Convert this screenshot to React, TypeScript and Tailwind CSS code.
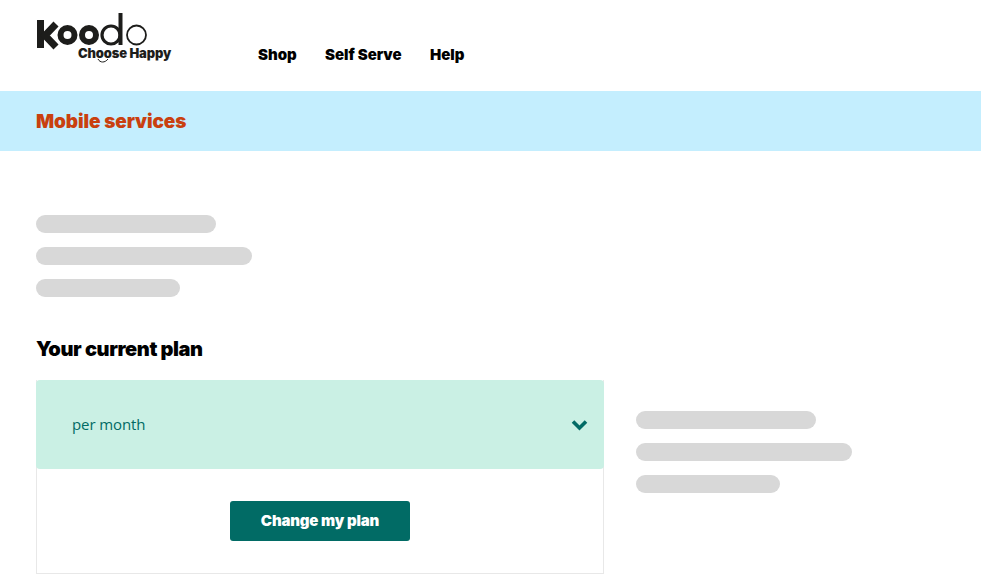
function KoodoLogo() {
  return (
    <div className="relative h-[62px] w-[140px]">
      <svg width="114" height="38" viewBox="0 0 114 38" className="block" aria-hidden="true">
        <path d="M4.5 8V36" stroke="#1d1d1b" strokeWidth="7" fill="none" />
        <path d="M20 12L9 23.5L20 35" stroke="#1d1d1b" strokeWidth="7" fill="none" />
        <circle cx="31.5" cy="23" r="7" fill="none" stroke="#1d1d1b" strokeWidth="6" />
        <circle cx="53" cy="23" r="7" fill="none" stroke="#1d1d1b" strokeWidth="6" />
        <circle cx="75" cy="23" r="9" fill="none" stroke="#1d1d1b" strokeWidth="3.2" />
        <path d="M84.5 1V33" stroke="#1d1d1b" strokeWidth="4" fill="none" />
        <circle cx="100.5" cy="23" r="9.5" fill="none" stroke="#1d1d1b" strokeWidth="1.8" />
      </svg>
      <div className="absolute left-[42px] top-[33px] font-['Inter',sans-serif] text-[13px] leading-[16px] font-black tracking-[-0.15px] whitespace-nowrap text-[#1d1d1b]">
        Choose Happy
      </div>
      <svg width="14" height="6" viewBox="0 0 14 6" className="absolute left-[60px] top-[46px]" aria-hidden="true">
        <path d="M2 1C4 5 9 5 12 1" stroke="#1d1d1b" strokeWidth="1" fill="none" />
      </svg>
    </div>
  );
}

function Skeleton() {
  return (
    <div className="flex flex-col gap-[14px]">
      <div className="h-[18px] w-[180px] rounded-full bg-[#d8d8d8]" />
      <div className="h-[18px] w-[216px] rounded-full bg-[#d8d8d8]" />
      <div className="h-[18px] w-[144px] rounded-full bg-[#d8d8d8]" />
    </div>
  );
}

export default function App() {
  return (
    <div className="h-[576px] overflow-hidden bg-white font-['Inter',sans-serif]">
      <header className="flex h-[91px] items-start pl-[36px]">
        <div className="pt-[12px]">
          <KoodoLogo />
        </div>
        <nav className="ml-[82px] flex gap-[28.5px] pt-[45px] text-[15px] leading-[20px] font-black tracking-[-0.05px] text-black">
          <a>Shop</a>
          <a>Self Serve</a>
          <a>Help</a>
        </nav>
      </header>

      <div className="flex h-[60px] items-center bg-[#c4eefe] pl-[36px]">
        <h1 className="pt-[2px] text-[19px] font-black tracking-[-0.1px] text-[#c9400f]">Mobile services</h1>
      </div>

      <main className="px-[36px] pt-[64px]">
        <Skeleton />
        <h2 className="mt-[40px] text-[20px] leading-[24px] font-black tracking-[-0.4px] text-black">Your current plan</h2>
        <div className="mt-[19px] flex gap-[32px]">
          <section className="h-[194px] w-[568px] border border-t-0 border-[#e8e8e8]">
            <div className="-mx-px flex h-[89px] items-center justify-between rounded-[4px] bg-[#caf0e4] pl-[36px] pr-[16px]">
              <span className="font-['Open_Sans',sans-serif] text-[15px] tracking-[-0.1px] text-[#016b65]">per month</span>
              <svg width="17" height="12" viewBox="0 0 17 12" aria-hidden="true">
                <path d="M2 2.5L8.5 9L15 2.5" stroke="#016b65" strokeWidth="3.6" fill="none" />
              </svg>
            </div>
            <div className="flex justify-center pt-[32px]">
              <button className="h-[40px] w-[180px] rounded-[3px] bg-[#016b65] text-[15px] font-black tracking-[-0.17px] text-white">
                Change my plan
              </button>
            </div>
          </section>
          <aside className="pt-[31px]">
            <Skeleton />
          </aside>
        </div>
      </main>
    </div>
  );
}
